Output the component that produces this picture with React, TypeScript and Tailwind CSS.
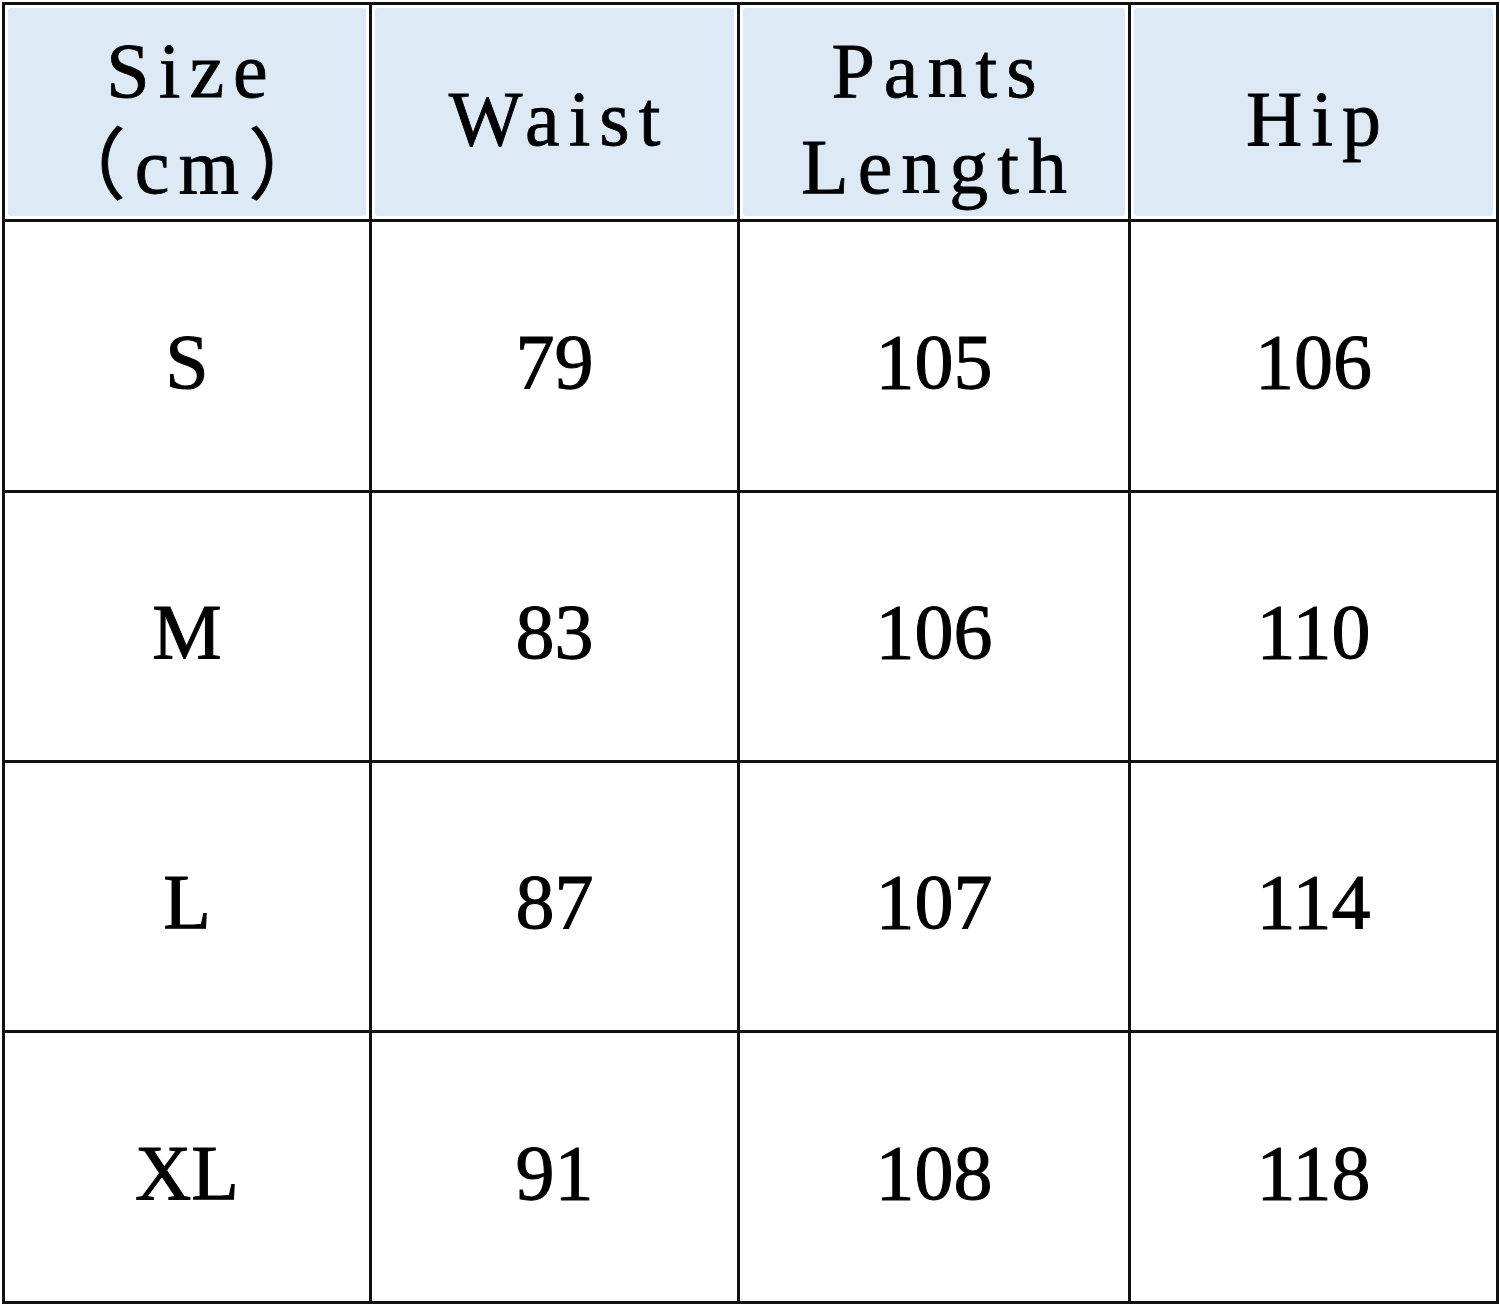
import React from 'react';

const headers: string[][] = [['Size', '（cm）'], ['Waist'], ['Pants', 'Length'], ['Hip']];

const rows: string[][] = [
  ['S', '79', '105', '106'],
  ['M', '83', '106', '110'],
  ['L', '87', '107', '114'],
  ['XL', '91', '108', '118'],
];

const font = { fontFamily: '"Liberation Serif", "Noto Sans CJK SC", serif' };

export default function App() {
  return (
    <div className="w-[1500px] h-[1306px] bg-white pt-[2px] pl-[2px]" style={font}>
      <div className="inline-grid grid-cols-[364px_365px_388px_365px] grid-rows-[214px_268px_267px_267px_268px] gap-[3px] p-[3px] bg-[#111]">
        {headers.map((lines, i) => (
          <div key={i} className="bg-white p-[3px]">
            <div className="h-full rounded-[3px] bg-[#dde9f5] flex flex-col items-center justify-center pt-[14px] pl-[9px] text-[78px] leading-[96px] tracking-[9px] text-black [-webkit-text-stroke:0.8px_#000]">
              {lines.map((l) => (
                <span key={l}>{l}</span>
              ))}
            </div>
          </div>
        ))}
        {rows.map((row) =>
          row.map((cell, j) => (
            <div key={row[0] + j} className="bg-white flex items-center justify-center pt-[10px] text-[78px] text-black [-webkit-text-stroke:1px_#000]">
              {cell}
            </div>
          ))
        )}
      </div>
    </div>
  );
}
